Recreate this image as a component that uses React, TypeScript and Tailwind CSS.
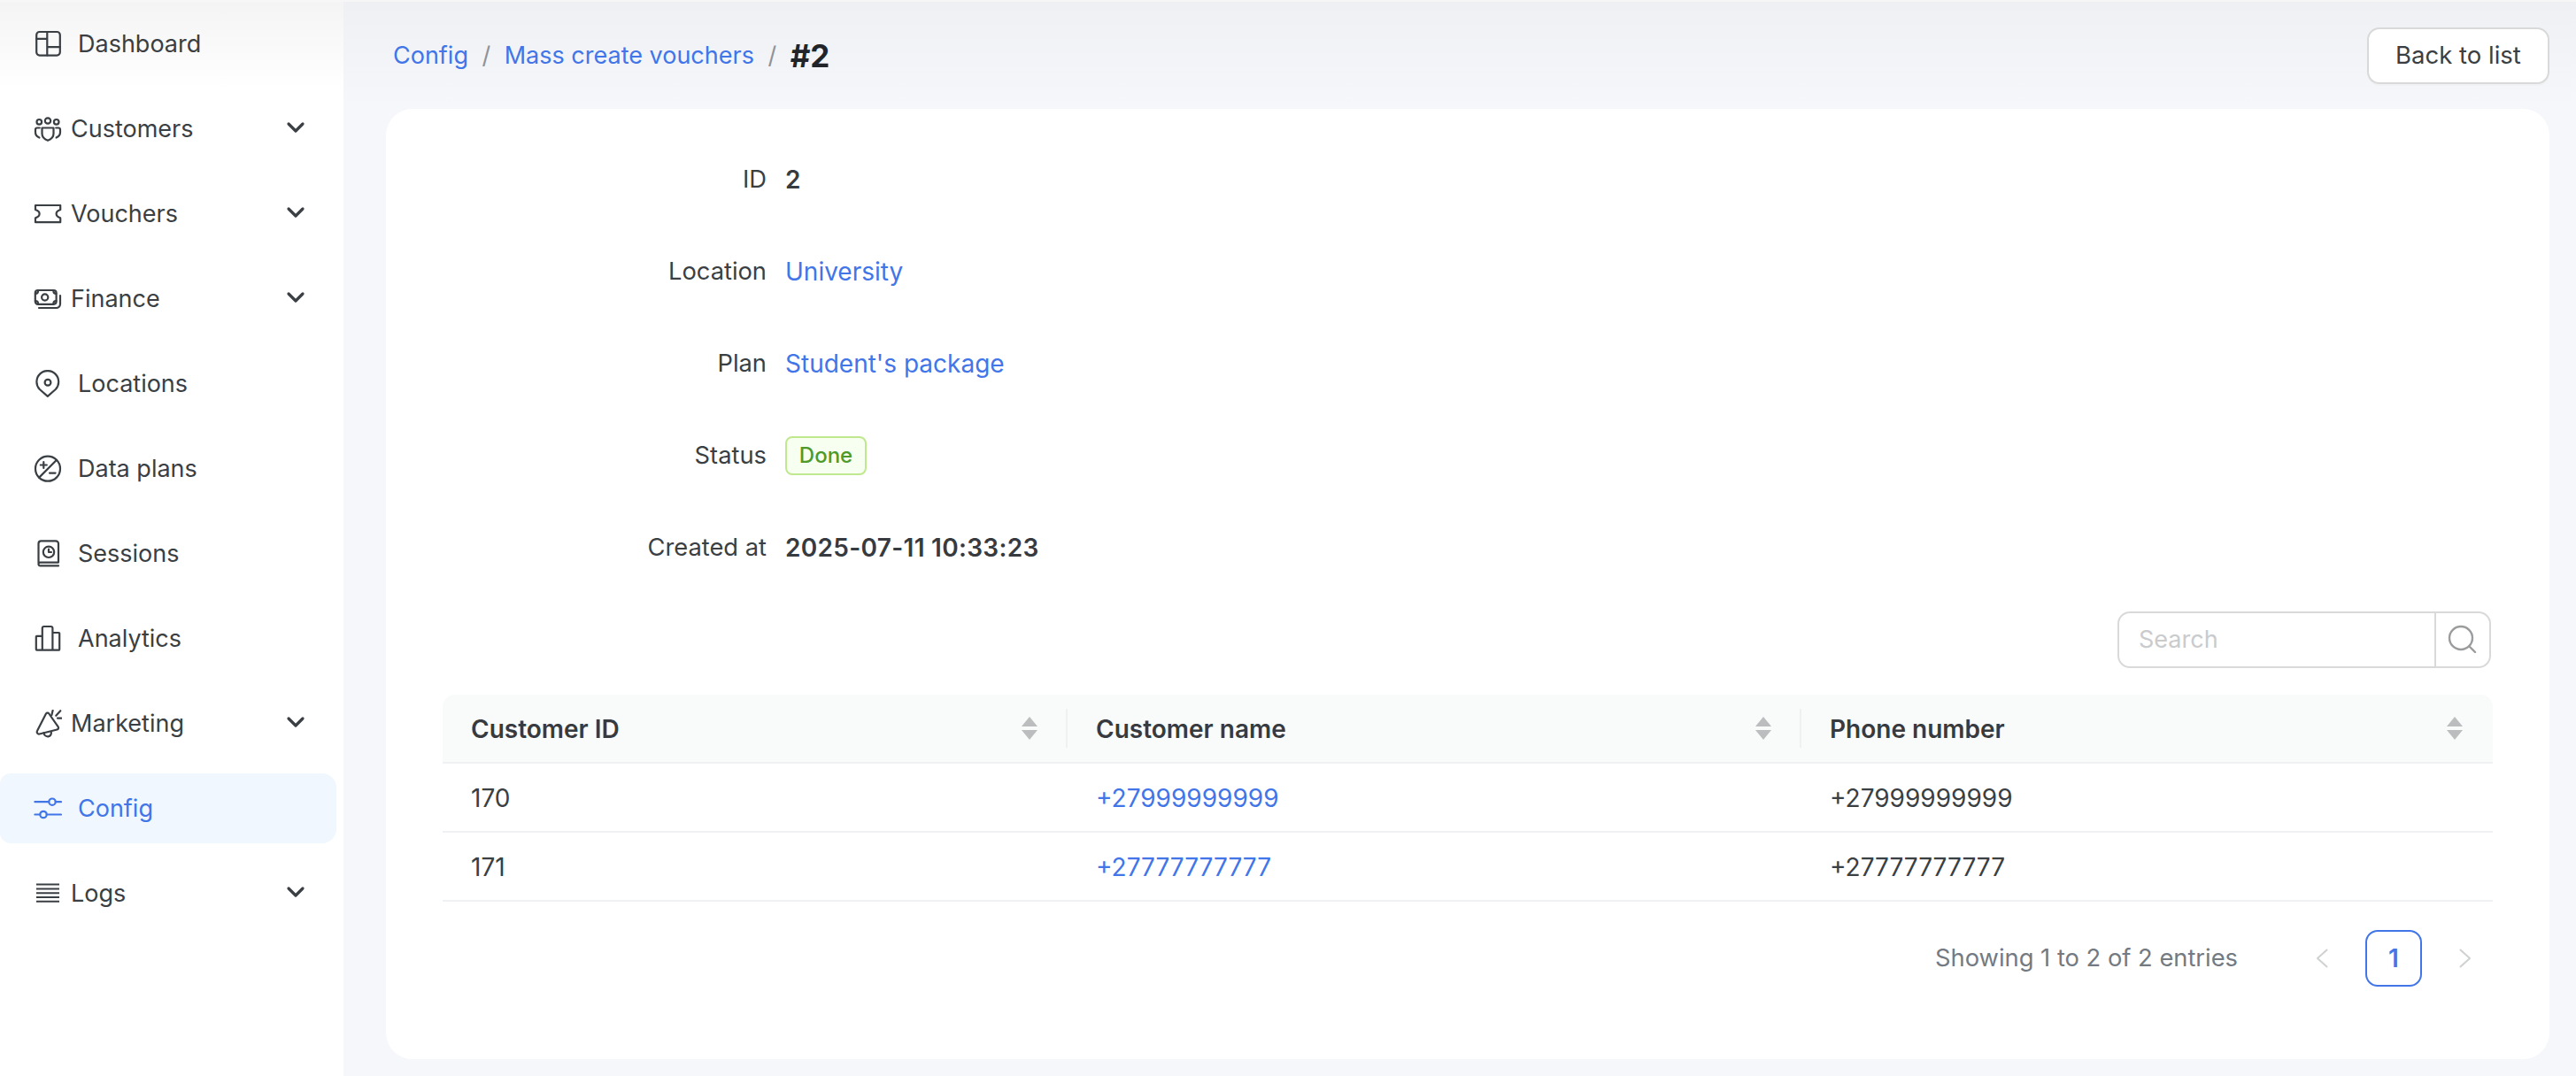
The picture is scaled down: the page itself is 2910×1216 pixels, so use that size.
import React from "react";
import { ChevronDown } from "lucide-react";

const Icon = ({ children, className = "" }: { children: React.ReactNode; className?: string }) => (
  <svg
    viewBox="0 0 32 32"
    fill="none"
    stroke="currentColor"
    strokeWidth="2.2"
    strokeLinecap="round"
    strokeLinejoin="round"
    className={`w-8 h-8 shrink-0 ${className}`}
  >
    {children}
  </svg>
);

const DashboardIcon = () => (
  <Icon>
    <rect x="3.2" y="2" width="26.6" height="26.6" rx="3.5" />
    <path d="M15.3 2v26.6M3.2 9.8h12.1M15.3 19.2h14.5" />
  </Icon>
);

const CustomersIcon = () => (
  <Icon>
    <circle cx="6.3" cy="7.8" r="2.8" />
    <circle cx="16" cy="6.5" r="3.2" />
    <circle cx="25.7" cy="7.8" r="2.8" />
    <path d="M9.5 14.5h13V21c0 4-3 6.5-6.5 7.8-3.5-1.3-6.5-3.8-6.5-7.8z" />
    <path d="M6.8 14.5H4a2 2 0 0 0-2 2v3c0 3 2 5 4.4 6" />
    <path d="M25.2 14.5H28a2 2 0 0 1 2 2v3c0 3-2 5-4.4 6" />
  </Icon>
);

const VouchersIcon = () => (
  <Icon>
    <path d="M2 6h28.2v5c-3 1-4.6 2.4-4.6 4.6s1.6 3.8 4.6 4.8v4.8H2v-4.8c3-1 4.6-2.6 4.6-4.8S5 12 2 11z" />
  </Icon>
);

const FinanceIcon = () => (
  <Icon>
    <rect x="1.8" y="6" width="23.8" height="15.8" rx="3" />
    <circle cx="12.7" cy="14" r="3.6" />
    <path d="M5 7c0 1.6-1 2.8-3 2.8M22.4 7c0 1.6 1 2.8 3 2.8M5 20.8c0-1.6-1-2.8-3-2.8M22.4 20.8c0-1.6 1-2.8 3-2.8" />
    <path d="M6 26h19.5a4.5 4.5 0 0 0 4.5-4.5V12" />
  </Icon>
);

const LocationsIcon = () => (
  <Icon>
    <path d="M15.8 29.8 6.8 22a12.4 12.4 0 1 1 18 0z" />
    <circle cx="16" cy="14.2" r="3.4" />
  </Icon>
);

const DataPlansIcon = () => (
  <Icon>
    <circle cx="16" cy="15.7" r="14" />
    <path d="M6.2 25.6 26 5.8M11.3 8v7M7.8 11.5h7M18 20.6h6.6" />
  </Icon>
);

const SessionsIcon = () => (
  <Icon>
    <path d="M5.5 26V4.4a3 3 0 0 1 3-3H25a3 3 0 0 1 3 3v21.2H7.5a2 2 0 0 0-2 2 1.8 1.8 0 0 0 2 1.8H28" />
    <circle cx="17" cy="13.8" r="6.2" />
    <path d="M17 10.6v3.4h3" />
  </Icon>
);

const AnalyticsIcon = () => (
  <Icon>
    <path d="M9.8 28.6H3.6a.8.8 0 0 1-.8-.8V13.6a.8.8 0 0 1 .8-.8h6.2M9.8 28.6V4a2 2 0 0 1 2-2h7.6a2 2 0 0 1 2 2v24.6zM21.4 9h7a.8.8 0 0 1 .8.8v18a.8.8 0 0 1-.8.8h-7" />
  </Icon>
);

const MarketingIcon = () => (
  <Icon>
    <path d="M14 4.5a2 2 0 0 1 3.3 0l10.4 14.9a2 2 0 0 1-1.2 3.1L6.6 27.5A2.4 2.4 0 0 1 4 24z" />
    <path d="M11.5 26.2c.5 3 3 4.4 5 4.1 2.5-.3 3.8-2.6 3.3-5.2" />
    <path d="M21.6 1l-1.2 5M30.3 1.2l-5 5.6M27 9.6h4.3" />
  </Icon>
);

const ConfigIcon = () => (
  <Icon>
    <path d="M1.4 8.2h15.8M24.8 8.2h6.2M1.4 22.5h5.8M14.8 22.5H31" />
    <circle cx="21" cy="8.2" r="3.7" />
    <circle cx="11" cy="22.5" r="3.7" />
  </Icon>
);

const LogsIcon = () => (
  <Icon>
    <path d="M3 5.5h26M3 10.4h26M3 15.2h26M3 19.9h26M3 24.8h26" strokeLinecap="butt" strokeWidth="2" />
  </Icon>
);

const navItems = [
  { label: "Dashboard", icon: <DashboardIcon />, hasChildren: false },
  { label: "Customers", icon: <CustomersIcon />, hasChildren: true },
  { label: "Vouchers", icon: <VouchersIcon />, hasChildren: true },
  { label: "Finance", icon: <FinanceIcon />, hasChildren: true },
  { label: "Locations", icon: <LocationsIcon />, hasChildren: false },
  { label: "Data plans", icon: <DataPlansIcon />, hasChildren: false },
  { label: "Sessions", icon: <SessionsIcon />, hasChildren: false },
  { label: "Analytics", icon: <AnalyticsIcon />, hasChildren: false },
  { label: "Marketing", icon: <MarketingIcon />, hasChildren: true },
  { label: "Config", icon: <ConfigIcon />, hasChildren: false, active: true },
  { label: "Logs", icon: <LogsIcon />, hasChildren: true },
];

const Sidebar = () => (
  <aside className="w-[388px] shrink-0 flex flex-col gap-[17px] pt-[10px] pr-2 bg-[linear-gradient(#f7f7f8_2px,#f4f4f5_2px,#ffffff_100px)]">
    {navItems.map((item) => (
      <div
        key={item.label}
        className={`h-[79px] pl-[38px] flex items-center rounded-r-2xl rounded-l-xl ${
          item.active ? "bg-[#f0f7fe] text-[#4175e8]" : "text-[#3a3f44]"
        }`}
      >
        {item.icon}
        <span className={`text-[27px] leading-none ${item.hasChildren ? "ml-[10px]" : "ml-[18px]"}`}>{item.label}</span>
        {item.hasChildren && (
          <ChevronDown className="ml-auto mr-[30px] -mt-[4px] w-8 h-8" strokeWidth={2.4} />
        )}
      </div>
    ))}
  </aside>
);

const Slash = () => <span className="mx-[15.5px] text-[#8f9296]">/</span>;

const InfoRow = ({ label, children }: { label: string; children: React.ReactNode }) => (
  <div className="h-[104px] flex items-center">
    <div className="w-[366px] text-right text-[27.3px] text-[#3a3f44]">{label}</div>
    <div className="ml-[21px]">{children}</div>
  </div>
);

const SortIcon = () => (
  <div className="flex flex-col gap-[4px] mr-[34px]">
    <div className="w-0 h-0 border-x-[9px] border-x-transparent border-b-[11px] border-b-[#bcbdbe]" />
    <div className="w-0 h-0 border-x-[9px] border-x-transparent border-t-[11px] border-t-[#bcbdbe]" />
  </div>
);

const HeaderCell = ({ label, divider }: { label: string; divider?: boolean }) => (
  <div className="flex items-center justify-between pl-8 relative">
    <span className="font-semibold text-[#373b40] pt-[2px]">{label}</span>
    <SortIcon />
    {divider && <div className="w-[2px] h-[44px] bg-[#eff0f1] absolute right-0 top-[16px]" />}
  </div>
);

const rows = [
  { id: "170", phone: "+27999999999" },
  { id: "171", phone: "+27777777777" },
];

export default function App() {
  return (
    <div className="w-[2910px] h-[1216px] flex overflow-hidden font-['Inter',sans-serif] text-[28px] bg-[#f6f7fb]">
      <Sidebar />
      <main className="flex-1 flex flex-col pl-[48px] pr-[30px] bg-[linear-gradient(#f6f6f7_2px,#eff0f4_2px,#f6f7fb_120px)]">
        <div className="h-[123px] shrink-0 pt-[31px] pl-[8px] flex items-start justify-between">
          <div className="h-[64px] flex items-center text-[27px] text-[#4175e8]">
            <span>Config</span>
            <Slash />
            <span>Mass create vouchers</span>
            <Slash />
            <span className="text-[35px] font-bold text-[#212428]">#2</span>
          </div>
          <button className="w-[206px] h-[64px] rounded-[14px] border-2 border-[#d9d9d9] bg-white text-[27.5px] text-[#3a3f44] shadow-[0_2px_0_rgba(0,0,0,0.02)]">
            Back to list
          </button>
        </div>
        <section className="h-[1074px] rounded-[30px] bg-white pt-[28px] px-[64px]">
          <InfoRow label="ID">
            <span className="font-semibold text-[#373b40]">2</span>
          </InfoRow>
          <InfoRow label="Location">
            <span className="text-[#4175e8]">University</span>
          </InfoRow>
          <InfoRow label="Plan">
            <span className="text-[#4175e8]">Student's package</span>
          </InfoRow>
          <InfoRow label="Status">
            <span className="h-[44px] w-[92px] flex items-center justify-center rounded-lg border-2 border-[#bfe88f] bg-[#f7fff0] text-[24px] font-medium text-[#4d9a2a]">
              Done
            </span>
          </InfoRow>
          <InfoRow label="Created at">
            <span className="font-semibold tracking-[0.3px] text-[#373b40]">2025-07-11 10:33:23</span>
          </InfoRow>

          <div className="mt-5 flex justify-end mr-[2px]">
            <div className="w-[422px] h-[64px] flex rounded-[14px] border-2 border-[#d9d9d9]">
              <div className="flex-1 flex items-center pl-[22px] text-[27px] text-[#c9cbcd]">Search</div>
              <div className="w-[62px] border-l-2 border-[#d9d9d9] flex items-center justify-center">
                <svg viewBox="0 0 34 34" fill="none" stroke="#9a9c9e" strokeWidth="2.4" strokeLinecap="round" className="w-[34px] h-[34px]">
                  <circle cx="15" cy="15" r="13" />
                  <path d="M24.5 24.5 31 31" />
                </svg>
              </div>
            </div>
          </div>

          <div className="mt-[30px]">
            <div className="grid grid-cols-[706px_829px_781px] h-[78px] bg-[#f9fafa] rounded-t-[14px] border-b-2 border-[#f0f1f2]">
              <HeaderCell label="Customer ID" divider />
              <HeaderCell label="Customer name" divider />
              <HeaderCell label="Phone number" />
            </div>
            {rows.map((row) => (
              <div key={row.id} className="grid grid-cols-[706px_829px_781px] h-[78px] border-b-2 border-[#f0f1f2] items-center text-[#3a3f44]">
                <div className="pl-8 pt-[2px]">{row.id}</div>
                <div className="pl-8 pt-[2px] text-[#4175e8]">{row.phone}</div>
                <div className="pl-8 pt-[2px]">{row.phone}</div>
              </div>
            ))}
          </div>

          <div className="mt-8 flex items-center justify-end">
            <span className="text-[27.3px] text-[#737a82]">Showing 1 to 2 of 2 entries</span>
            <svg viewBox="0 0 14 22" fill="none" stroke="#cfd0d1" strokeWidth="2" strokeLinecap="round" strokeLinejoin="round" className="ml-[88px] w-[14px] h-[22px]">
              <path d="M12.5 1.5 2 11l10.5 9.5" />
            </svg>
            <div className="ml-[42px] w-[64px] h-[64px] rounded-[14px] border-2 border-[#4175e8] flex items-center justify-center font-semibold text-[#4175e8]">
              1
            </div>
            <svg viewBox="0 0 14 22" fill="none" stroke="#cfd0d1" strokeWidth="2" strokeLinecap="round" strokeLinejoin="round" className="ml-[42px] mr-[24px] w-[14px] h-[22px]">
              <path d="M1.5 1.5 12 11 1.5 20.5" />
            </svg>
          </div>
        </section>
      </main>
    </div>
  );
}
